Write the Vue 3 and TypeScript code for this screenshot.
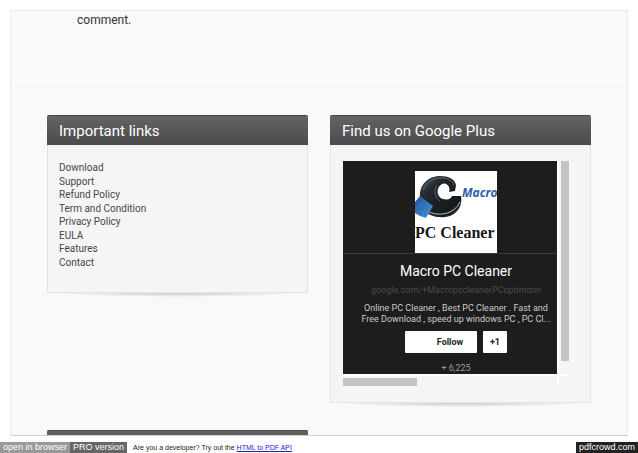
<script setup lang="ts">
interface LinkItem {
  label: string
  href: string
}

const links: LinkItem[] = [
  { label: 'Download', href: '#download' },
  { label: 'Support', href: '#support' },
  { label: 'Refund Policy', href: '#refund-policy' },
  { label: 'Term and Condition', href: '#terms' },
  { label: 'Privacy Policy', href: '#privacy' },
  { label: 'EULA', href: '#eula' },
  { label: 'Features', href: '#features' },
  { label: 'Contact', href: '#contact' },
]
</script>

<template>
  <div class="screen">
    <main class="sheet">
      <section class="article">
        <p>comment.</p>
      </section>
      <div class="widgets">
        <section class="panel">
          <h2>Important links</h2>
          <ul class="links">
            <li v-for="link in links" :key="link.label">
              <a :href="link.href">{{ link.label }}</a>
            </li>
          </ul>
        </section>
        <section class="panel">
          <h2>Find us on Google Plus</h2>
          <div class="frame">
            <div class="badge">
              <div class="cover">
                <svg class="logo" viewBox="0 0 82 82" role="img" aria-label="Macro PC Cleaner logo">
                  <defs>
                    <linearGradient id="ring" x1="0" y1="0" x2="1" y2="1">
                      <stop offset="0" stop-color="#4a545b" />
                      <stop offset="0.3" stop-color="#23292e" />
                      <stop offset="0.75" stop-color="#15191c" />
                      <stop offset="1" stop-color="#323a40" />
                    </linearGradient>
                    <linearGradient id="brush" x1="0" y1="0" x2="1" y2="1">
                      <stop offset="0" stop-color="#1b4f96" />
                      <stop offset="1" stop-color="#4f9de0" />
                    </linearGradient>
                  </defs>
                  <rect width="82" height="82" fill="#fff" />
                  <path d="M5 26C4 14 13 5 25 5C33 5 40 8 41 14L40 20L34 21C36 15 31 11 27 13C21 16 21 26 28 28C33 29 36 28 37 25L46 25C48 36 41 45 30 46C21 47 12 44 8 38C5 34 5 30 5 26Z" fill="url(#ring)" />
                  <path d="M14 41C26 46 40 42 45 31" fill="none" stroke="#b4bec3" stroke-width="1" />
                  <path d="M8 19C12 10 19 7 27 7C33 7 38 10 39 14" fill="none" stroke="#5d6a72" stroke-width="1" />
                  <path d="M22 14C18 20 20 27 25 30" fill="none" stroke="#56646c" stroke-width="1" />
                  <path d="M5 25L18 35L11 47L5 45L0 42V31Z" fill="url(#brush)" />
                  <path d="M5 31L2 41M9 33L5 44M13 35L9 45" stroke="#2f74bd" stroke-width="1" fill="none" />
                  <text class="logo-macro" x="47" y="26">Macro</text>
                  <text class="logo-name" x="0" y="67">PC Cleaner</text>
                </svg>
              </div>
              <h3>Macro PC Cleaner</h3>
              <a class="address" href="#profile">google.com/+MacropccleanerPCoptimizer</a>
              <p class="tagline">Online PC Cleaner , Best PC Cleaner . Fast and<br />Free Download , speed up windows PC , PC Cl...</p>
              <div class="actions">
                <button class="follow" type="button">Follow</button>
                <button class="plus" type="button">+1</button>
              </div>
              <p class="count">+ 6,225</p>
            </div>
            <div class="rail rail-y"><div class="thumb-y"></div></div>
            <div class="rail rail-x"><div class="thumb-x"></div></div>
            <div class="corner"></div>
          </div>
        </section>
        <section class="panel next"><div class="cap"></div></section>
      </div>
    </main>
    <footer>
      <a class="tag open" href="#open">open in browser</a>
      <a class="tag pro" href="#pro">PRO version</a>
      <span class="pitch">Are you a developer? Try out the <a href="#api">HTML to PDF API</a></span>
      <a class="tag brand" href="#pdfcrowd">pdfcrowd.com</a>
    </footer>
  </div>
</template>

<style>
body {
  margin: 0;
  background: #fff;
}
</style>

<style scoped>
.screen {
  box-sizing: border-box;
  padding-top: 10px;
  font-family: Roboto, "Liberation Sans", sans-serif;
  color: #333;
}
h2, h3, p, ul {
  margin: 0;
  padding: 0;
  font-weight: 400;
}
a {
  color: inherit;
  text-decoration: none;
}
.sheet {
  margin: 0 10px;
  border: 1px solid #ebebeb;
  border-bottom-color: #ccd0d5;
  background: #f9f9f9;
}
.article {
  height: 69px;
  margin: 0 2px;
  border-bottom: 1px solid #fff;
}
.article p {
  padding-left: 64px;
  font-size: 12px;
  line-height: 18px;
}
.widgets {
  display: grid;
  grid-template-columns: 1fr 1fr;
  align-items: start;
  gap: 27px 22px;
  padding: 34px 36px 0;
}
.panel {
  position: relative;
  min-width: 0;
  border-radius: 2px 2px 0 0;
  background: #f5f5f5;
  box-shadow: inset 0 0 0 1px #e5e3e4;
}
.panel::after {
  content: "";
  position: absolute;
  top: 100%;
  left: 12px;
  right: 12px;
  height: 4px;
  background: radial-gradient(ellipse at 50% 0, #cbcbcb 0%, #e6e6e6 45%, transparent 72%);
}
.panel h2 {
  padding: 2px 12px 0;
  border-top: 1px solid #444;
  border-radius: 2px 2px 0 0;
  background: linear-gradient(#646464, #4b4b4b);
  color: #fff;
  font-size: 15px;
  line-height: 27px;
}
.links {
  padding: 16px 12px 24px;
  list-style: none;
  color: #444750;
  font-size: 10px;
}
.links li {
  height: 14px;
  line-height: 14px;
}
.links li:nth-child(even) {
  height: 13px;
}
.frame {
  display: grid;
  grid-template-columns: 1fr 12px;
  grid-template-rows: auto 12px;
  padding: 16px 22px 17px 13px;
}
.badge {
  height: 213px;
  overflow: hidden;
  background: #1d1d1d;
  color: #ccc;
  text-align: center;
}
.cover {
  display: flex;
  justify-content: center;
  padding: 10px 0 0 12px;
  border-bottom: 1px solid #3b3b3b;
}
.logo {
  display: block;
  width: 82px;
  height: 82px;
}
.logo-macro {
  fill: #2e5da7;
  font: italic 700 12px "Open Sans", sans-serif;
}
.logo-name {
  fill: #181818;
  font: 700 16px "Liberation Serif", serif;
}
.badge h3 {
  padding: 8px 0 0 12px;
  color: #fff;
  font-size: 14px;
  line-height: 18px;
}
.address {
  display: block;
  height: 13px;
  margin-top: 4px;
  padding-left: 12px;
  color: #4b4b4b;
  font-size: 9px;
  line-height: 13px;
}
.tagline {
  margin-top: 6px;
  padding-left: 12px;
  font-size: 9px;
  line-height: 11px;
  white-space: nowrap;
}
.actions {
  display: flex;
  justify-content: center;
  gap: 6px;
  margin-top: 6px;
  padding-left: 12px;
}
.actions button {
  height: 22px;
  padding: 0;
  border: 0;
  border-radius: 1px;
  background: #fff;
  color: #222;
  font: 700 9px Roboto, sans-serif;
}
.actions .follow {
  width: 72px;
  padding-left: 18px;
}
.actions .plus {
  width: 24px;
}
.count {
  margin-top: 9px;
  padding-left: 12px;
  color: #999;
  font-size: 9px;
  line-height: 13px;
}
.rail-y {
  padding: 0 0 0 2px;
  border-left: 2px solid #fff;
}
.thumb-y {
  height: 200px;
  background: #c4c4c4;
}
.rail-x {
  padding-top: 2px;
  border-top: 2px solid #fff;
}
.thumb-x {
  width: 74px;
  height: 8px;
  background: #c4c4c4;
}
.corner {
  border-top: 2px solid #fff;
  border-left: 2px solid #fff;
}
.panel.next {
  overflow: hidden;
}
.cap {
  height: 5px;
  background: #606060;
  border-top: 1px solid #4b4b4b;
  box-sizing: border-box;
}
footer {
  display: flex;
  align-items: center;
  height: 13px;
  padding-top: 5px;
  font-family: "Liberation Sans", Arial, sans-serif;
}
.tag {
  padding: 0 3px;
  color: #fff;
  font-size: 9px;
  line-height: 11px;
}
.open {
  background: #999;
}
.pro {
  background: #666;
}
.pitch {
  padding-left: 6px;
  color: #222;
  font-size: 7px;
  line-height: 11px;
}
.pitch a {
  color: #22c;
  text-decoration: underline;
}
.brand {
  margin-left: auto;
  background: #222;
}
</style>
